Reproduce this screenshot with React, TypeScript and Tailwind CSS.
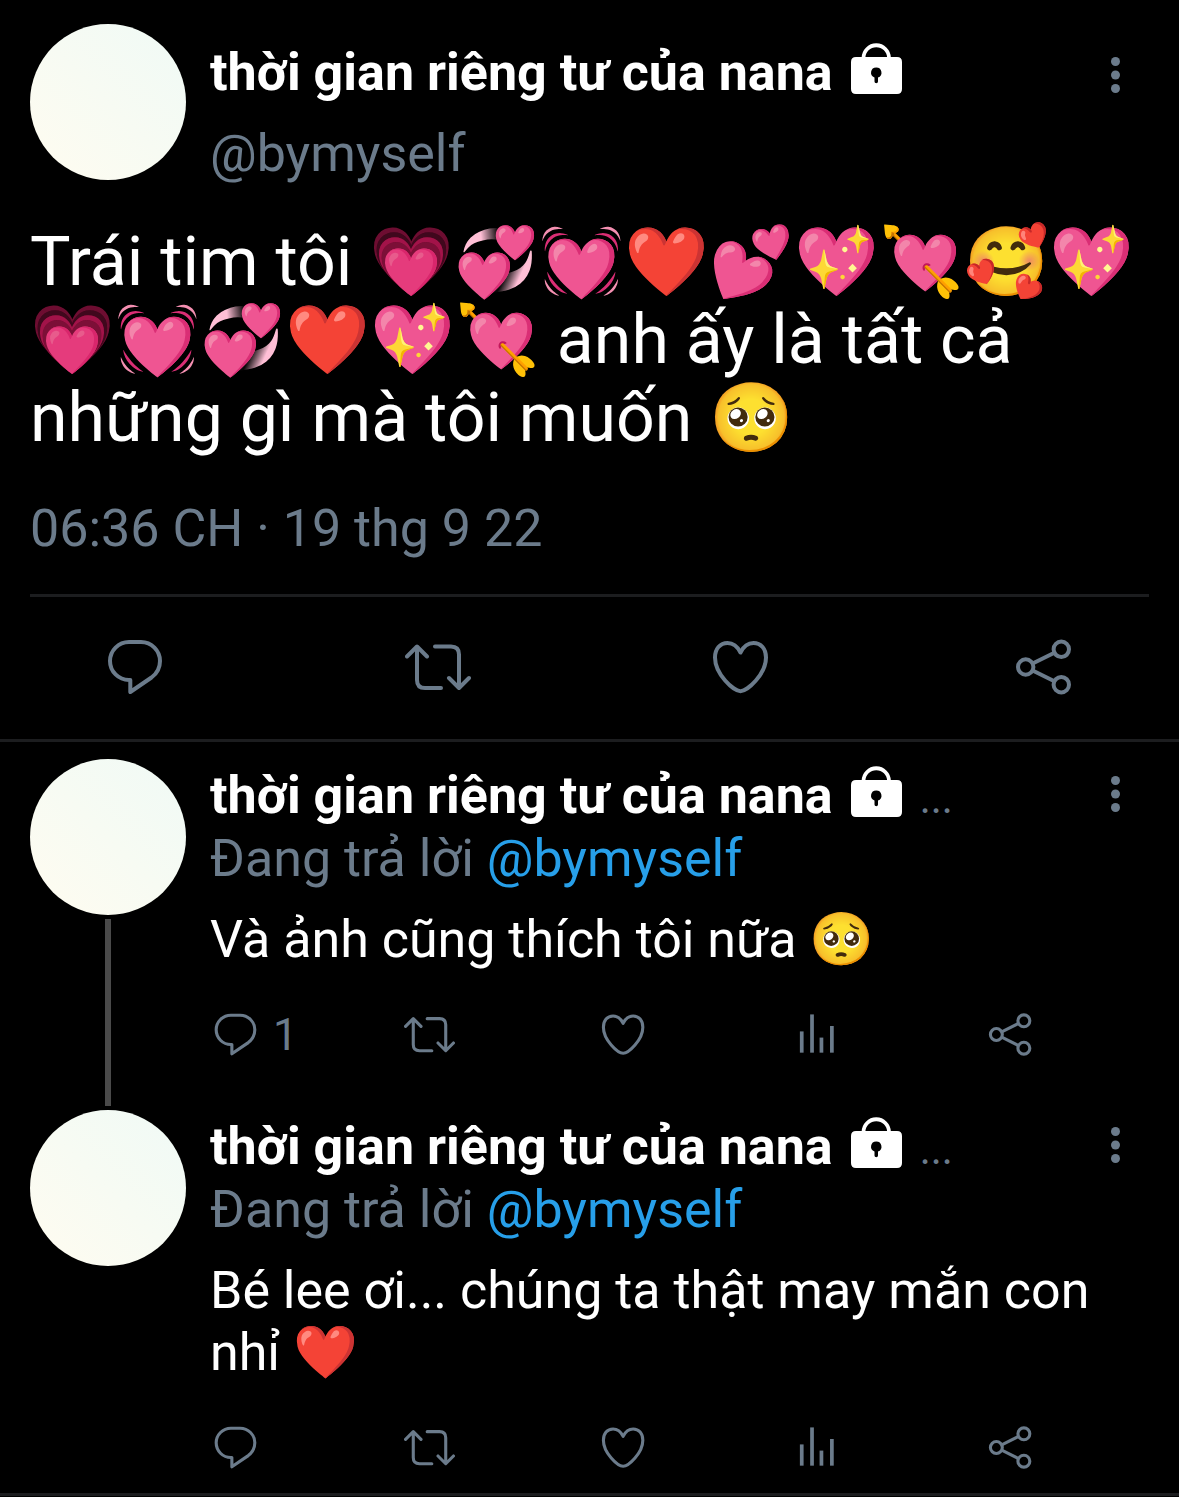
import React from 'react';
import clsx from 'clsx';

const NAME = 'thời gian riêng tư của nana';

type IconProps = { className?: string };

function ReplyIcon({ className }: IconProps) {
  return (
    <svg viewBox="0 0 66 66" className={className} fill="none" stroke="currentColor" strokeWidth="4" strokeLinejoin="round" aria-hidden="true">
      <path d="M27 8H39A19 19 0 0 1 58 27C58 34 55 39.500 49.500 43.500L28.300 58V46H27A19 19 0 0 1 27 8Z" />
    </svg>
  );
}

function RetweetIcon({ className }: IconProps) {
  return (
    <svg viewBox="0 0 66 66" className={className} fill="none" stroke="currentColor" strokeWidth="4" strokeLinecap="round" strokeLinejoin="round" aria-hidden="true">
      <path d="M2 22.500L12 12.500L22 22.500M12 13.500V46Q12 54 20 54H36" />
      <path d="M30 12.500H46Q54 12.500 54 20.500V53M44 44L54 54L64 44" />
    </svg>
  );
}

function LikeIcon({ className }: IconProps) {
  return (
    <svg viewBox="0 0 66 66" className={className} fill="none" stroke="currentColor" strokeWidth="4" strokeLinejoin="round" aria-hidden="true">
      <path d="M32.500 18.500C29.500 12.500 25 9 19.500 9C12 9 7 15 7 23.500C7 40 25.500 57.200 32.500 57.200C39.500 57.200 58 40 58 23.500C58 15 53 9 45.500 9C40 9 35.500 12.500 32.500 18.500Z" />
    </svg>
  );
}

function ViewsIcon({ className }: IconProps) {
  return (
    <svg viewBox="0 0 66 66" className={className} fill="currentColor" aria-hidden="true">
      <rect x="11.500" y="29" width="4.800" height="27.500" />
      <rect x="24.800" y="7" width="4.800" height="49.500" />
      <rect x="37" y="37" width="4.800" height="19.500" />
      <rect x="50.500" y="22" width="4.800" height="34.500" />
    </svg>
  );
}

function ShareIcon({ className }: IconProps) {
  return (
    <svg viewBox="0 0 66 66" className={className} fill="none" stroke="currentColor" strokeWidth="4" aria-hidden="true">
      <circle cx="14.700" cy="33" r="7.700" />
      <circle cx="50.300" cy="15.300" r="7.700" />
      <circle cx="50.300" cy="50.700" r="7.700" />
      <path d="M21.600 29.500L43.400 18.700M21.600 36.500L43.400 47.300" />
    </svg>
  );
}

function LockIcon() {
  return (
    <svg viewBox="0 0 51 52" className="mt-0.5 h-[52px] w-[51px] shrink-0" role="img" aria-label="Protected">
      <path d="M12.500 15A12.750 12.750 0 0 1 38 15" fill="none" stroke="white" strokeWidth="3.800" />
      <path fill="white" fillRule="evenodd" d="M5 14H46Q51 14 51 19V46Q51 51 46 51H5Q0 51 0 46V19Q0 14 5 14ZM25.200 24.500A5.200 5.200 0 0 0 23.500 34.600V38.500A1.700 1.700 0 0 0 27 38.500V34.600A5.200 5.200 0 0 0 25.200 24.500Z" />
    </svg>
  );
}

function MoreButton({ className }: IconProps) {
  return (
    <button type="button" aria-label="More" className={clsx('mr-[29px] shrink-0 text-[#6b7b8b]', className)}>
      <svg viewBox="0 0 9 36" className="h-9 w-[9px]" fill="currentColor" aria-hidden="true">
        <circle cx="4.500" cy="4.500" r="4.500" />
        <circle cx="4.500" cy="18" r="4.500" />
        <circle cx="4.500" cy="31.500" r="4.500" />
      </svg>
    </button>
  );
}

function Avatar() {
  return <div className="size-[156px] shrink-0 rounded-full bg-linear-to-tr from-[#fffcf0] via-[#f7fbf3] to-[#f0faf6]" />;
}

type ActionProps = { label: string; icon: React.ReactNode; count?: number; className: string };

function Action({ label, icon, count, className }: ActionProps) {
  return (
    <button type="button" aria-label={label} className={clsx('flex items-center gap-3', className)}>
      {icon}
      {count !== undefined && <span className="text-[44px] leading-[50px]">{count}</span>}
    </button>
  );
}

type ReplyProps = { text: string; replies?: number; threaded?: boolean };

function Reply({ text, replies, threaded }: ReplyProps) {
  const icon = 'size-[51px] shrink-0';
  return (
    <article className="flex gap-6 px-[30px]">
      <div className="flex flex-col items-center">
        <Avatar />
        {threaded && <div className="my-1 w-1.5 flex-1 bg-[#4a4a4a]" />}
      </div>
      <div className={clsx('min-w-0 flex-1 pt-[5px]', threaded ? 'pb-[50px]' : 'pb-5')}>
        <div className="flex items-start justify-between">
          <div className="flex items-start gap-[18px]">
            <h2 className="font-bold">{NAME}</h2>
            <LockIcon />
            <span className="h-[63px] text-[42px] leading-[70px] text-[#6b7b8b]">...</span>
          </div>
          <MoreButton className="mt-3" />
        </div>
        <p className="text-[#6b7b8b]">
          Đang trả lời <a href="#bymyself" className="text-[#279fe9]">@bymyself</a>
        </p>
        <p className="mt-[19px] leading-[62px]">{text}</p>
        <div className="mt-[38px] flex justify-between pr-[113px] text-[#6b7b8b]">
          <Action label="Reply" icon={<ReplyIcon className={icon} />} count={replies} className="w-[51px]" />
          <Action label="Retweet" icon={<RetweetIcon className={icon} />} className="w-[51px]" />
          <Action label="Like" icon={<LikeIcon className={icon} />} className="w-[51px]" />
          <Action label="Views" icon={<ViewsIcon className={icon} />} className="w-[51px]" />
          <Action label="Share" icon={<ShareIcon className={icon} />} className="w-[51px]" />
        </div>
      </div>
    </article>
  );
}

export default function App() {
  const icon = 'size-[66px] shrink-0';
  return (
    <main className="min-h-screen bg-black font-[Roboto,sans-serif] text-[52px] leading-[63px] text-white">
      <article className="px-[30px] pt-6">
        <header className="flex gap-6">
          <Avatar />
          <div className="min-w-0 flex-1 pt-[17px]">
            <div className="flex items-start justify-between">
              <div className="flex items-start gap-[18px]">
                <h1 className="font-bold">{NAME}</h1>
                <LockIcon />
              </div>
              <MoreButton className="mt-4" />
            </div>
            <p className="mt-[18px] text-[#6b7b8b]">@bymyself</p>
          </div>
        </header>
        <p className="mt-[38px] text-[68px] leading-[78px]">
          Trái tim tôi 💗💞💓❤️💕💖💘🥰💖 💗💓💞❤️💖💘 anh ấy là tất cả những gì mà tôi muốn 🥺
        </p>
        <time dateTime="2022-09-19T18:36" className="mt-10 block text-[#6b7b8b]">06:36 CH · 19 thg 9 22</time>
        <div className="mt-[34px] border-t-3 border-[#1c1d1f] px-[72px] pt-[37px] pb-[39px]">
          <div className="flex justify-between text-[#6b7b8b]">
            <Action label="Reply" icon={<ReplyIcon className={icon} />} className="w-[66px]" />
            <Action label="Retweet" icon={<RetweetIcon className={icon} />} className="w-[66px]" />
            <Action label="Like" icon={<LikeIcon className={icon} />} className="w-[66px]" />
            <Action label="Share" icon={<ShareIcon className={icon} />} className="w-[66px]" />
          </div>
        </div>
      </article>
      <section className="border-y-3 border-[#1c1d1f] pt-[17px]">
        <Reply text="Và ảnh cũng thích tôi nữa 🥺" replies={1} threaded />
        <Reply text="Bé lee ơi... chúng ta thật may mắn con nhỉ ❤️" />
      </section>
    </main>
  );
}
